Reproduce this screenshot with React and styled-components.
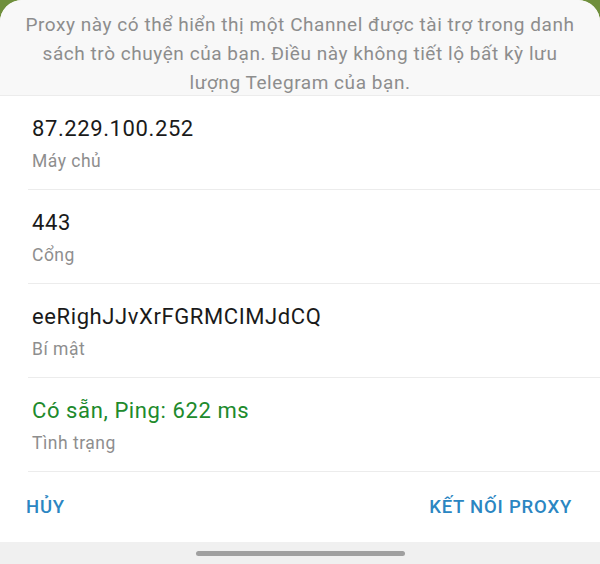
import React from "react";
import styled, { createGlobalStyle } from "styled-components";

const GlobalStyle = createGlobalStyle`
  html, body {
    margin: 0;
    padding: 0;
    background: #6f8f3c;
  }
  body {
    font-family: Roboto, "Noto Sans", Arial, sans-serif;
    -webkit-font-smoothing: antialiased;
  }
`;

const Sheet = styled.div`
  width: 600px;
  height: 564px;
  display: flex;
  flex-direction: column;
  background: #ffffff;
  border-radius: 22px 22px 0 0;
  overflow: hidden;
`;

const Notice = styled.p`
  margin: 0;
  height: 96px;
  box-sizing: border-box;
  padding: 10px 20px 0;
  background: #f8f8f8;
  border-bottom: 1.5px solid #ececec;
  color: #8d8d8d;
  font-size: 19px;
  letter-spacing: 0.55px;
  line-height: 29px;
  text-align: center;
`;

const List = styled.div`
  display: flex;
  flex-direction: column;
`;

const Row = styled.div`
  height: 94px;
  box-sizing: border-box;
  margin-left: 28px;
  padding: 18px 0 0 4px;
  border-bottom: 1.5px solid #ececec;
`;

const Value = styled.div`
  font-size: 22px;
  letter-spacing: 0.6px;
  line-height: 30px;
  color: ${(p) => (p.$ok ? "#208a2c" : "#1a1a1a")};
`;

const Label = styled.div`
  margin-top: 5px;
  font-size: 17.5px;
  letter-spacing: 0.5px;
  line-height: 24px;
  color: #8e8e8e;
`;

const Actions = styled.div`
  height: 70px;
  display: flex;
  align-items: center;
  justify-content: space-between;
  padding: 0 28px 0 26px;
`;

const ActionButton = styled.button`
  border: 0;
  background: none;
  padding: 0;
  font-family: inherit;
  font-size: 18.5px;
  letter-spacing: 0.8px;
  font-weight: 500;
  color: #2b86c2;
  cursor: pointer;
`;

const NavBar = styled.div`
  flex: 1;
  display: flex;
  align-items: center;
  justify-content: center;
  background: #f0f0f0;
`;

const Handle = styled.div`
  width: 209px;
  height: 5px;
  border-radius: 3px;
  background: #a0a0a0;
`;

const fields = [
  { value: "87.229.100.252", label: "Máy chủ" },
  { value: "443", label: "Cổng" },
  { value: "eeRighJJvXrFGRMCIMJdCQ", label: "Bí mật" },
  { value: "Có sẵn, Ping: 622 ms", label: "Tình trạng", ok: true },
];

export default function App() {
  return (
    <>
      <GlobalStyle />
      <Sheet>
        <Notice>
          Proxy này có thể hiển thị một Channel được tài trợ trong danh sách trò
          chuyện của bạn. Điều này không tiết lộ bất kỳ lưu lượng Telegram của
          bạn.
        </Notice>
        <List>
          {fields.map((f) => (
            <Row key={f.label}>
              <Value $ok={f.ok}>{f.value}</Value>
              <Label>{f.label}</Label>
            </Row>
          ))}
        </List>
        <Actions>
          <ActionButton>HỦY</ActionButton>
          <ActionButton>KẾT NỐI PROXY</ActionButton>
        </Actions>
        <NavBar>
          <Handle />
        </NavBar>
      </Sheet>
    </>
  );
}
